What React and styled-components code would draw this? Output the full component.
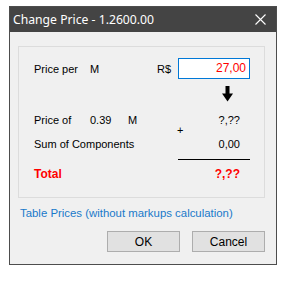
import React from "react";
import styled, { createGlobalStyle } from "styled-components";

const Global = createGlobalStyle`
  html, body { margin: 0; padding: 0; background: #fff; }
  body { font-family: "Liberation Sans", Arial, sans-serif; font-size: 11px; color: #000; }
`;

const Page = styled.div`
  padding: 6px 0 0 9px;
`;

const Window = styled.div`
  width: 266px;
  height: 257px;
  border: 1px solid #4d4d4d;
  background: #f0f0f0;
  display: flex;
  flex-direction: column;
`;

const TitleBar = styled.div`
  height: 25px;
  background: #444444;
  color: #fff;
  display: flex;
  align-items: center;
  justify-content: space-between;
  padding: 0 10px 0 3px;
  font-family: "Noto Sans", "Open Sans", sans-serif;
  font-size: 12.2px;
`;

const Group = styled.div`
  margin: 14px 11px 0 8px;
  height: 152px;
  border: 1px solid #dcdcdc;
  padding: 11px 0 0 15px;
  box-sizing: border-box;
`;

const Row = styled.div`
  display: flex;
  align-items: center;
  height: ${p => p.h || 13}px;
  margin-top: ${p => p.mt || 0}px;
  color: ${p => p.color || "#000"};
  font-weight: ${p => (p.bold ? "bold" : "normal")};
  font-size: ${p => (p.bold ? 12 : 11)}px;
`;

const Cell = styled.div`
  width: ${p => p.w}px;
  flex: none;
  text-align: ${p => p.align || "left"};
  white-space: nowrap;
`;

const PriceInput = styled.div`
  width: 72px;
  height: 21px;
  box-sizing: border-box;
  border: 1px solid #0078d7;
  background: #fff;
  color: #ff0000;
  text-align: right;
  padding: 0 3px;
  line-height: 19px;
  font-size: 12px;
`;

const Rule = styled.div`
  margin: 9px 0 0 144px;
  width: 72px;
  height: 1px;
  background: #000;
`;

const Link = styled.div`
  margin: 9px 0 0 10px;
  color: #1979ca;
  font-size: 11.4px;
  height: 14px;
`;

const Buttons = styled.div`
  display: flex;
  justify-content: flex-end;
  gap: 12px;
  margin: 10px 11px 0 0;
`;

const Button = styled.div`
  width: 73px;
  height: 21px;
  box-sizing: border-box;
  border: 1px solid #adadad;
  background: #e1e1e1;
  display: flex;
  align-items: center;
  justify-content: center;
  font-size: 12px;
`;

const CloseIcon = () => (
  <svg width="11" height="11" viewBox="0 0 11 11">
    <path d="M0.5 0.5 L10.5 10.5 M10.5 0.5 L0.5 10.5" stroke="#fff" strokeWidth="1.1" />
  </svg>
);

const DownArrow = () => (
  <svg width="11" height="16" viewBox="0 0 11 16">
    <rect x="3.5" y="0" width="4" height="8" fill="#000" />
    <path d="M0 7.5 L11 7.5 L5.5 15.5 Z" fill="#000" />
  </svg>
);

export default function App() {
  return (
    <Page>
      <Global />
      <Window>
        <TitleBar>
          <span>Change Price - 1.2600.00</span>
          <CloseIcon />
        </TitleBar>
        <Group>
          <Row h={21}>
            <Cell w={56}>Price per</Cell>
            <Cell w={67}>M</Cell>
            <Cell w={21}>R$</Cell>
            <PriceInput>27,00</PriceInput>
          </Row>
          <Row h={16} mt={7}>
            <Cell w={188} />
            <DownArrow />
          </Row>
          <Row mt={11}>
            <Cell w={56}>Price of</Cell>
            <Cell w={38}>0.39</Cell>
            <Cell w={56}>M</Cell>
            <Cell w={56} align="right">?,??</Cell>
          </Row>
          <Row h={8}>
            <Cell w={143} />
            <Cell w={8}>+</Cell>
          </Row>
          <Row mt={3}>
            <Cell w={150}>Sum of Components</Cell>
            <Cell w={56} align="right">0,00</Cell>
          </Row>
          <Rule />
          <Row mt={7} color="#ff0000" bold>
            <Cell w={150}>Total</Cell>
            <Cell w={56} align="right">?,??</Cell>
          </Row>
        </Group>
        <Link>Table Prices (without markups calculation)</Link>
        <Buttons>
          <Button>OK</Button>
          <Button>Cancel</Button>
        </Buttons>
      </Window>
    </Page>
  );
}
